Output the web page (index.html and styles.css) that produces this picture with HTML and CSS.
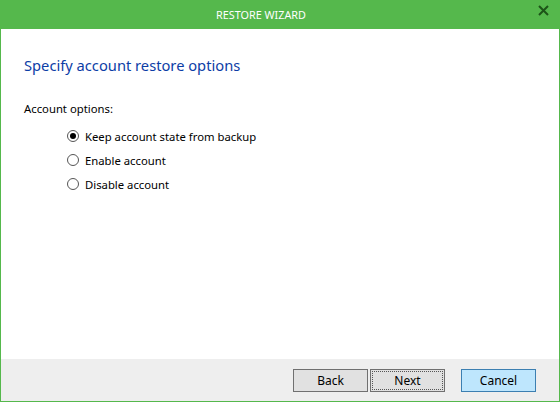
FILE: index.html
```html
<!DOCTYPE html>
<html>
<head>
<meta charset="utf-8">
<link rel="stylesheet" href="styles.css">
</head>
<body>
<div class="window">
  <div class="titlebar">
    <span class="title">RESTORE WIZARD</span>
    <svg class="close" width="11" height="11" viewBox="0 0 11 11"><path d="M1 1L10 10M10 1L1 10" stroke="#1d5418" stroke-width="2"/></svg>
  </div>
  <div class="content">
    <h1 class="heading">Specify account restore options</h1>
    <div class="label">Account options:</div>
    <div class="options">
      <label class="option"><span class="radio checked"></span><span>Keep account state from backup</span></label>
      <label class="option"><span class="radio"></span><span>Enable account</span></label>
      <label class="option"><span class="radio"></span><span>Disable account</span></label>
    </div>
  </div>
  <div class="footer">
    <div class="btn">Back</div>
    <div class="btn focus"><span class="focusrect">Next</span></div>
    <div class="btn primary">Cancel</div>
  </div>
</div>
</body>
</html>
```
FILE: styles.css
```css
html, body {
  margin: 0;
  padding: 0;
  background: #ffffff;
}
body {
  font-family: "Noto Sans", "Open Sans", sans-serif;
  font-size: 11.3px;
  color: #000;
}
.window {
  width: 560px;
  height: 402px;
  box-sizing: border-box;
  background: #55b84c;
  padding: 0 1px 1px 1px;
  display: flex;
  flex-direction: column;
}
.titlebar {
  height: 29px;
  flex: none;
  position: relative;
  display: flex;
  align-items: center;
  justify-content: center;
  padding-right: 38px;
}
.title {
  color: #fff;
  font-size: 10.8px;
  line-height: 29px;
}
.close {
  position: absolute;
  right: 10px;
  top: 5px;
}
.content {
  flex: 1;
  background: #fff;
  padding: 0 0 0 23px;
}
.heading {
  margin: 26px 0 0 0;
  font-weight: normal;
  font-size: 14.7px;
  line-height: 20px;
  color: #0c3da6;
}
.label {
  margin-top: 26px;
  line-height: 16px;
}
.options {
  margin-top: 7px;
  padding-left: 43px;
  display: flex;
  flex-direction: column;
}
.option {
  display: flex;
  align-items: center;
  height: 24px;
  gap: 6px;
}
.radio {
  width: 12px;
  height: 12px;
  border: 1px solid #555;
  border-radius: 50%;
  box-sizing: border-box;
  display: flex;
  align-items: center;
  justify-content: center;
  background: #fff;
}
.radio.checked::after {
  content: "";
  width: 6px;
  height: 6px;
  border-radius: 50%;
  background: #000;
}
.footer {
  height: 42px;
  flex: none;
  background: #eeeeee;
  display: flex;
  justify-content: flex-end;
  align-items: flex-start;
  padding: 10px 23px 0 0;
  box-sizing: border-box;
  font-size: 12px;
}
.btn {
  width: 75px;
  height: 23px;
  box-sizing: border-box;
  border: 1px solid #707070;
  background: #e1e1e1;
  display: flex;
  align-items: center;
  justify-content: center;
  line-height: 16px;
}
.btn + .btn {
  margin-left: 2px;
}
.btn.focus {
  padding: 1px;
}
.focusrect {
  flex: 1;
  align-self: stretch;
  border: 1px dotted #555;
  display: flex;
  align-items: center;
  justify-content: center;
}
.btn.primary {
  margin-left: 16px;
  background: #bee6fd;
  border-color: #3c7fb1;
}
```
